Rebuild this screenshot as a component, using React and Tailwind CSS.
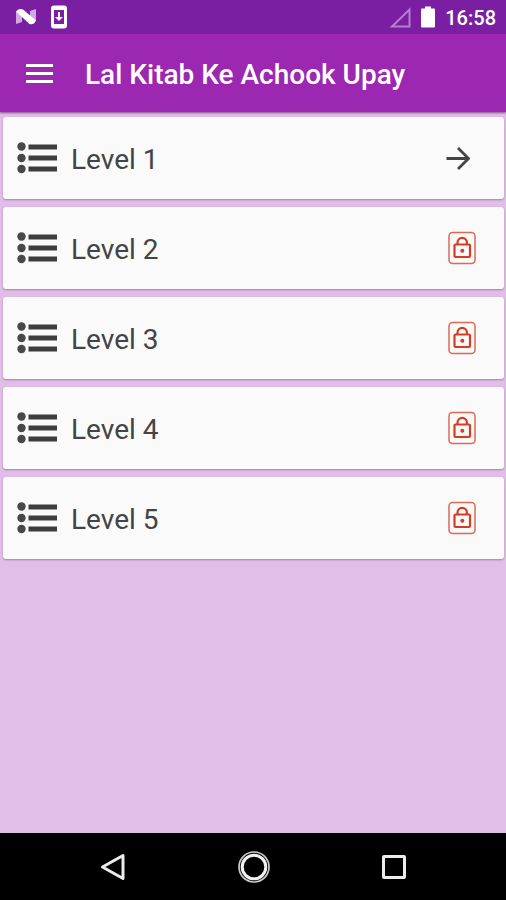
const levels = [
  { name: 'Level 1', open: true },
  { name: 'Level 2', open: false },
  { name: 'Level 3', open: false },
  { name: 'Level 4', open: false },
  { name: 'Level 5', open: false },
];

function StatusBar() {
  return (
    <div className="flex h-[34px] items-center justify-between bg-[#7b1fa2] pr-[10px] pl-4 text-white">
      <div className="flex items-center gap-[15px]">
        <svg className="h-5 w-5" viewBox="0 0 20 20" aria-hidden="true">
          <path d="M0 4L6 7V15L0 17Z" fill="#cfa9e0" />
          <path d="M14 4L20 2V14L14 12Z" fill="#cfa9e0" />
          <path d="M0 4.500Q3 1 7 2.500L20 13.500Q17.500 18.500 13.500 17Z" fill="#fff" />
        </svg>
        <svg className="h-6 w-4" viewBox="0 0 16 24" aria-hidden="true">
          <rect width="16" height="23" y="0.500" rx="3" fill="#fff" />
          <rect x="3" y="5" width="10" height="14" fill="#7b1fa2" />
          <path d="M7 7h2v5h3l-4 4-4-4h3z" fill="#fff" />
        </svg>
      </div>
      <div className="flex items-center">
        <svg className="mr-[10px] h-[22px] w-[22px]" viewBox="0 0 22 22" aria-hidden="true">
          <path d="M3 20.500L20.500 3.500V20.500Z" fill="none" stroke="#b67fcd" strokeWidth="2" />
        </svg>
        <svg className="mr-[10px] h-[22px] w-[14px]" viewBox="0 0 14 22" aria-hidden="true">
          <path d="M4 0.500h6v2h3q1 0 1 1v17q0 1-1 1H1q-1 0-1-1v-17q0-1 1-1h3z" fill="#fff" />
        </svg>
        <span className="pt-0.5 text-xl leading-6 font-medium">16:58</span>
      </div>
    </div>
  );
}

function ListIcon() {
  return (
    <svg className="h-8 w-10" viewBox="0 0 40 32" aria-hidden="true">
      <g fill="#484848">
        <circle cx="4.500" cy="4.500" r="4.200" />
        <circle cx="4.500" cy="16" r="4.200" />
        <circle cx="4.500" cy="27" r="4.200" />
      </g>
      <g fill="#3d3d3d">
        <rect x="11.500" y="2.500" width="28.500" height="5" />
        <rect x="11.500" y="13.500" width="28.500" height="5" />
        <rect x="11.500" y="24.500" width="28.500" height="5" />
      </g>
    </svg>
  );
}

function ArrowIcon() {
  return (
    <svg className="mr-[6px] h-6 w-6" viewBox="0 0 24 24" fill="none" stroke="#444" strokeWidth="2.800" aria-hidden="true">
      <path d="M0.500 12.500H22M12 2L22.500 12.500L12 23" />
    </svg>
  );
}

function LockIcon() {
  return (
    <svg className="h-[34px] w-7" viewBox="0 0 28 34" fill="none" stroke="#d63c24" aria-hidden="true">
      <rect x="1" y="1.500" width="26" height="31" rx="3.500" strokeWidth="1.500" stroke="#dc6a55" />
      <rect x="6.500" y="13.500" width="15.500" height="12.500" rx="1" strokeWidth="2.200" />
      <path d="M9.500 13V11.500a4.700 4.700 0 0 1 9.400 0V13" strokeWidth="2.200" />
      <circle cx="14.300" cy="19.700" r="2" fill="#d63c24" stroke="none" />
    </svg>
  );
}

function LevelCard({ level }) {
  return (
    <li>
      <button
        type="button"
        className="flex h-[82px] w-full items-center rounded-[3px] bg-[#fafafa] pr-7 pl-[14px] text-left shadow-[0_1px_2px_rgba(80,30,90,0.4)]"
      >
        <ListIcon />
        <span className="ml-[14px] flex-1 pt-1 text-[28px] leading-8 text-[#444]">{level.name}</span>
        {level.open ? <ArrowIcon /> : <LockIcon />}
      </button>
    </li>
  );
}

export default function App() {
  return (
    <div className="flex min-h-screen flex-col bg-[#e1bee7] font-['Roboto',sans-serif]">
      <StatusBar />
      <header className="flex h-[78px] items-center bg-[#9c27b0] pl-[26px] shadow-[0_1px_2px_rgba(60,10,70,0.6)]">
        <button type="button" aria-label="Open menu" className="mr-8 flex w-[27px] flex-col gap-[5px]">
          <span className="h-[3px] bg-white" />
          <span className="h-[3px] bg-white" />
          <span className="h-[3px] bg-white" />
        </button>
        <h1 className="pt-1 text-[28px] leading-8 font-medium text-white">Lal Kitab Ke Achook Upay</h1>
      </header>
      <main className="flex-1">
        <ul className="flex flex-col gap-2 pt-[5px] pr-[2px] pb-2 pl-[3px]">
          {levels.map((level) => (
            <LevelCard key={level.name} level={level} />
          ))}
        </ul>
      </main>
      <nav className="flex h-[67px] items-center justify-center gap-[108px] bg-black pl-0.5" aria-label="System">
        <button type="button" aria-label="Back">
          <svg className="h-8 w-8" viewBox="0 0 32 32" fill="none" aria-hidden="true">
            <path d="M4.500 16L25 4.500V27.500Z" stroke="#ececec" strokeWidth="3" strokeLinejoin="round" />
          </svg>
        </button>
        <button type="button" aria-label="Home">
          <svg className="h-8 w-8" viewBox="0 0 32 32" fill="none" aria-hidden="true">
            <circle cx="16" cy="16" r="15" stroke="#ccc" strokeWidth="1.700" />
            <circle cx="16" cy="16" r="11.800" stroke="#f2f2f2" strokeWidth="3" />
          </svg>
        </button>
        <button type="button" aria-label="Recent apps">
          <svg className="h-8 w-8" viewBox="0 0 32 32" fill="none" aria-hidden="true">
            <rect x="5.500" y="5.500" width="21" height="21" rx="0.500" stroke="#ececec" strokeWidth="3" />
          </svg>
        </button>
      </nav>
    </div>
  );
}
